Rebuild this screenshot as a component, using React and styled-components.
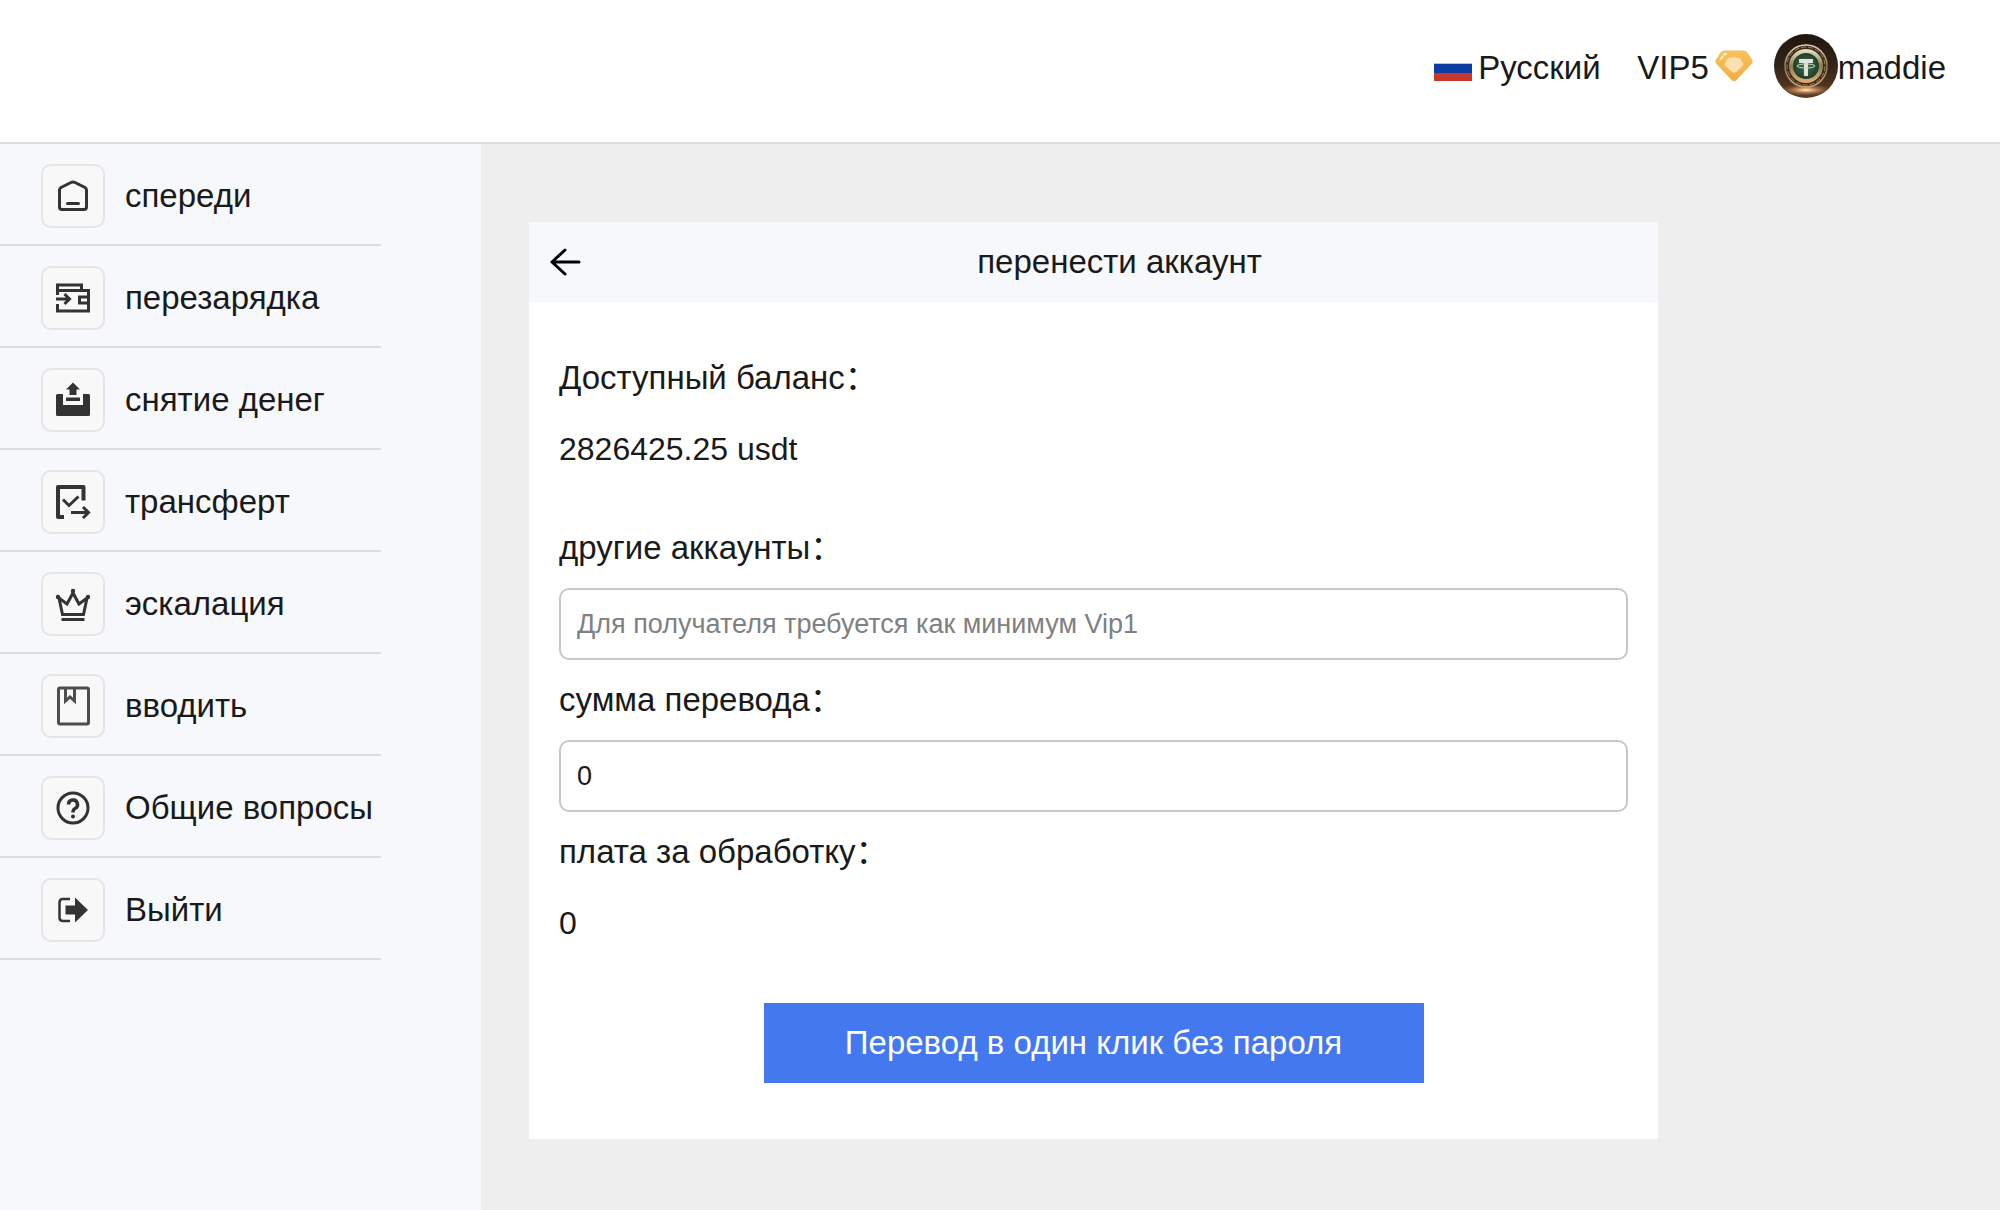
import React, {useState} from 'react';
import styled, {createGlobalStyle} from 'styled-components';

const GlobalStyle = createGlobalStyle`
  * {
    box-sizing: border-box;
  }

  body {
    margin: 0;
    background: #eeeeee;
    color: #1a1a1a;
    font-family: "Liberation Sans", "Noto Sans CJK SC", sans-serif;
    font-size: 33px;
    line-height: 40px;
  }

  button, input, select {
    font: inherit;
    color: inherit;
  }
`;

const Page = styled.div`
  display: flex;
  flex-direction: column;
  min-height: 100vh;
`;

const TopBar = styled.header`
  display: flex;
  align-items: center;
  justify-content: flex-end;
  height: 144px;
  padding: 0 54px 10px 0;
  background: #ffffff;
  border-bottom: 2px solid #dcdddf;
`;

const Language = styled.label`
  display: flex;
  align-items: center;
  gap: 6px;
  margin-right: 36px;
`;

const LanguageSelect = styled.select`
  appearance: none;
  padding: 4px 0 0;
  border: none;
  background: transparent;
  cursor: pointer;
`;

const Level = styled.div`
  display: flex;
  align-items: center;
  gap: 6px;
  margin-right: 21px;
`;

const Profile = styled.a`
  display: flex;
  align-items: center;
  color: inherit;
  text-decoration: none;
`;

const Caption = styled.span`
  padding-top: 4px;
`;

const Content = styled.div`
  display: flex;
  flex: 1;
`;

const Sidebar = styled.nav`
  flex: none;
  width: 481px;
  background: #f7f8fc;
`;

const Menu = styled.ul`
  width: 381px;
  margin: 0;
  padding: 0;
  list-style: none;
`;

const MenuItem = styled.li`
  border-bottom: 2px solid #dcdddf;
`;

const MenuLink = styled.a`
  display: flex;
  align-items: center;
  gap: 20px;
  padding: 20px 0 16px 41px;
  color: inherit;
  text-decoration: none;
  white-space: nowrap;
`;

const IconBox = styled.span`
  display: flex;
  flex: none;
  align-items: center;
  justify-content: center;
  width: 64px;
  height: 64px;
  border: 2px solid #e5e5e5;
  border-radius: 10px;
  background: #f8f8f8;
`;

const Main = styled.main`
  flex: 1;
  padding: 78px 342px 70px 48px;
`;

const Card = styled.section`
  background: #ffffff;
`;

const CardHeader = styled.div`
  display: flex;
  align-items: center;
  height: 80px;
  padding-left: 20px;
  background: #f7f8fc;
`;

const BackButton = styled.button`
  display: flex;
  padding: 0;
  border: none;
  background: transparent;
  cursor: pointer;
`;

const Title = styled.h1`
  flex: 1;
  margin: 0;
  font-size: 33px;
  font-weight: normal;
  text-align: center;
`;

const Form = styled.form`
  display: flex;
  flex-direction: column;
  padding: 36px 30px 56px;
`;

const Label = styled.label`
  line-height: 80px;
`;

const Value = styled.output`
  margin-bottom: ${props => props.$gap};
  font-size: 32px;
  line-height: 62px;
`;

const InputField = styled.input`
  width: 100%;
  height: 72px;
  padding: 0 16px;
  border: 2px solid #c8c8c8;
  border-radius: 10px;
  background: #ffffff;
  font-size: 27px;

  &::placeholder {
    color: #808080;
    opacity: 1;
  }
`;

const SubmitButton = styled.button`
  align-self: center;
  width: 660px;
  max-width: 100%;
  height: 80px;
  border: none;
  background: #4378ee;
  color: #ffffff;
  cursor: pointer;
`;

const Flag = () => (
    <svg width="38" height="30" viewBox="0 0 38 30" aria-hidden="true">
        <rect y="4" width="38" height="9" fill="#ffffff"/>
        <rect y="12" width="38" height="1" fill="#b9c2d8"/>
        <rect y="13" width="38" height="9" fill="#0d3ba3"/>
        <rect y="22" width="38" height="8" fill="#c8382a"/>
    </svg>
);

const Diamond = () => (
    <svg width="38" height="32" viewBox="0 0 38 32" aria-hidden="true">
        <defs>
            <linearGradient id="gem" x1="0" y1="0" x2="0" y2="1">
                <stop offset="0" stopColor="#f9c25c"/>
                <stop offset="1" stopColor="#f3ad44"/>
            </linearGradient>
        </defs>
        <path d="M10 0.500h18q3 0 4.500 2l4.500 7q1.500 2.500-0.500 4.500L21.500 30q-2.500 2.500-5 0L1.500 14q-2-2-0.500-4.500l4.500-7q1.500-2 4.500-2z"
              fill="url(#gem)"/>
        <path d="M15 7.500h8q1.500 0 2.500 1.500l2.500 4q1 1.500 0 2.500l-7 6.500q-2 1.500-4 0l-7-6.500q-1-1 0-2.500l2.500-4q1-1.500 2.500-1.500z"
              fill="#fbe0b0"/>
        <path d="M6 9l1.500-2.500M9 4.500l2-0.500" fill="none" stroke="#fff6e2" strokeWidth="2" strokeLinecap="round"/>
    </svg>
);

const Avatar = () => (
    <svg width="64" height="64" viewBox="0 0 64 64" aria-hidden="true">
        <defs>
            <linearGradient id="wood" x1="0" y1="0" x2="0" y2="1">
                <stop offset="0" stopColor="#20160f"/>
                <stop offset="0.5" stopColor="#33241a"/>
                <stop offset="0.85" stopColor="#54361f"/>
                <stop offset="1" stopColor="#5a3b24"/>
            </linearGradient>
            <linearGradient id="rim" x1="0" y1="0" x2="0" y2="1">
                <stop offset="0" stopColor="#e3d8b8"/>
                <stop offset="0.5" stopColor="#8f7b52"/>
                <stop offset="1" stopColor="#d9ab77"/>
            </linearGradient>
            <radialGradient id="coin">
                <stop offset="0" stopColor="#44744f"/>
                <stop offset="1" stopColor="#173624"/>
            </radialGradient>
            <radialGradient id="glow">
                <stop offset="0" stopColor="#fff4dc"/>
                <stop offset="0.25" stopColor="#e8b07a" stopOpacity="0.9"/>
                <stop offset="1" stopColor="#8a5632" stopOpacity="0"/>
            </radialGradient>
            <clipPath id="round"><circle cx="32" cy="32" r="32"/></clipPath>
        </defs>
        <g clipPath="url(#round)">
            <rect width="64" height="64" fill="url(#wood)"/>
            <circle cx="32" cy="32" r="21" fill="#38291c" stroke="url(#rim)" strokeWidth="1.500"/>
            <circle cx="32" cy="32" r="19" fill="none" stroke="#a08a60" strokeWidth="1" strokeDasharray="5 2"/>
            <circle cx="32" cy="32" r="15" fill="url(#coin)" stroke="url(#rim)" strokeWidth="4"/>
            <ellipse cx="32" cy="56" rx="28" ry="6" fill="url(#glow)"/>
            <path d="M25 25h14v4h-5v13h-4V29h-5z" fill="#dfe3d8"/>
            <ellipse cx="32" cy="32" rx="9" ry="2" fill="none" stroke="#cfd6c8" strokeWidth="1"/>
        </g>
    </svg>
);

const ArrowLeft = () => (
    <svg width="32" height="28" viewBox="0 0 32 28" fill="none" stroke="#000000" strokeWidth="3"
         strokeLinecap="round" strokeLinejoin="round" aria-hidden="true">
        <path d="M30 14H3M16 2L3 14l13 12"/>
    </svg>
);

const MenuIcon = ({children}) => (
    <svg width="40" height="40" viewBox="0 0 40 40" fill="none" stroke="#333333" strokeWidth="3" aria-hidden="true">
        {children}
    </svg>
);

const menu = [
    {
        label: 'спереди',
        icon: <path d="M8 11.500Q6.500 12.500 6.500 14V31Q6.500 33.500 9 33.500H31Q33.500 33.500 33.500 31V14Q33.500 12.500 32 11.500L22 6.500Q20 5.500 18 6.500zM14.500 27.500H25.500"
                    strokeLinecap="round"/>
    },
    {
        label: 'перезарядка',
        icon: <path d="M4.500 17V7H28.500V12M4.500 12.500H35.500V33H4.500V26M3 21H15M11.500 16l5 5-5 5M35.500 19H26.500V25H35.500"/>
    },
    {
        label: 'снятие денег',
        icon: (
            <g fill="#333333" stroke="none">
                <path d="M20 2.500l7 7h-3.500V15h-7V9.500H13zM13 17.500h14V21H13z"/>
                <path d="M4.500 14H10v11h20V14h5.500Q37 14 37 15.500v19q0 1.500-1.500 1.500h-31Q3 36 3 34.500v-19Q3 14 4.500 14z"/>
            </g>
        )
    },
    {
        label: 'трансферт',
        icon: (
            <g>
                <path d="M11 35H5V5H30.500V18.500" strokeWidth="4" strokeLinejoin="round"/>
                <path d="M10 17.500l6 6 9.500-9M18 30.500H35M30 25l5.500 5.500L30 36"/>
            </g>
        )
    },
    {
        label: 'эскалация',
        icon: (
            <g>
                <path d="M6 14l3.500 16.500h21L34 14l-8 6L20 9l-6 11z"/>
                <path d="M8.500 35.500h23"/>
                <g fill="#333333" stroke="none">
                    <circle cx="20" cy="7" r="2.200"/>
                    <circle cx="5" cy="13" r="2.200"/>
                    <circle cx="35" cy="13" r="2.200"/>
                </g>
            </g>
        )
    },
    {
        label: 'вводить',
        icon: (
            <g stroke="#4d4d4d">
                <rect x="5.500" y="2" width="30" height="36" rx="1.500"/>
                <path d="M12.500 2v13l4.500-4 4.500 4V2"/>
            </g>
        )
    },
    {
        label: 'Общие вопросы',
        icon: (
            <g>
                <circle cx="20" cy="20" r="15"/>
                <path d="M15.500 16.500a4.500 4.500 0 1 1 6.500 4q-2 1-2 4" strokeWidth="3.500"/>
                <circle cx="20" cy="28.500" r="2" fill="#333333" stroke="none"/>
            </g>
        )
    },
    {
        label: 'Выйти',
        icon: (
            <g>
                <path d="M17 9h-7q-3.500 0-3.500 3.500v15Q6.500 31 10 31h7" strokeWidth="2.500"/>
                <path d="M12.500 15.500H22V7.500L35 20 22 32.500V24.500h-9.500z" fill="#333333" stroke="none"/>
            </g>
        )
    }
];

function App() {
    const [account, setAccount] = useState('');
    const [amount, setAmount] = useState('0');

    return (
        <Page>
            <GlobalStyle/>
            <TopBar>
                <Language>
                    <Flag/>
                    <LanguageSelect aria-label="Язык" defaultValue="ru">
                        <option value="ru">Русский</option>
                    </LanguageSelect>
                </Language>
                <Level><Caption>VIP5</Caption><Diamond/></Level>
                <Profile href="#profile"><Avatar/><Caption>maddie</Caption></Profile>
            </TopBar>
            <Content>
                <Sidebar>
                    <Menu>
                        {menu.map(item => (
                            <MenuItem key={item.label}>
                                <MenuLink href="#">
                                    <IconBox><MenuIcon>{item.icon}</MenuIcon></IconBox>
                                    {item.label}
                                </MenuLink>
                            </MenuItem>
                        ))}
                    </Menu>
                </Sidebar>
                <Main>
                    <Card>
                        <CardHeader>
                            <BackButton type="button" aria-label="Назад"><ArrowLeft/></BackButton>
                            <Title>перенести аккаунт</Title>
                        </CardHeader>
                        <Form onSubmit={e => e.preventDefault()}>
                            <Label htmlFor="balance">Доступный баланс：</Label>
                            <Value id="balance" $gap="28px">2826425.25 usdt</Value>
                            <Label htmlFor="account">другие аккаунты：</Label>
                            <InputField
                                id="account"
                                placeholder="Для получателя требуется как минимум Vip1"
                                value={account}
                                onChange={e => setAccount(e.target.value)}
                            />
                            <Label htmlFor="amount">сумма перевода：</Label>
                            <InputField
                                id="amount"
                                value={amount}
                                onChange={e => setAmount(e.target.value)}
                            />
                            <Label htmlFor="fee">плата за обработку：</Label>
                            <Value id="fee" $gap="49px">0</Value>
                            <SubmitButton type="submit">Перевод в один клик без пароля</SubmitButton>
                        </Form>
                    </Card>
                </Main>
            </Content>
        </Page>
    );
}

export default App;
